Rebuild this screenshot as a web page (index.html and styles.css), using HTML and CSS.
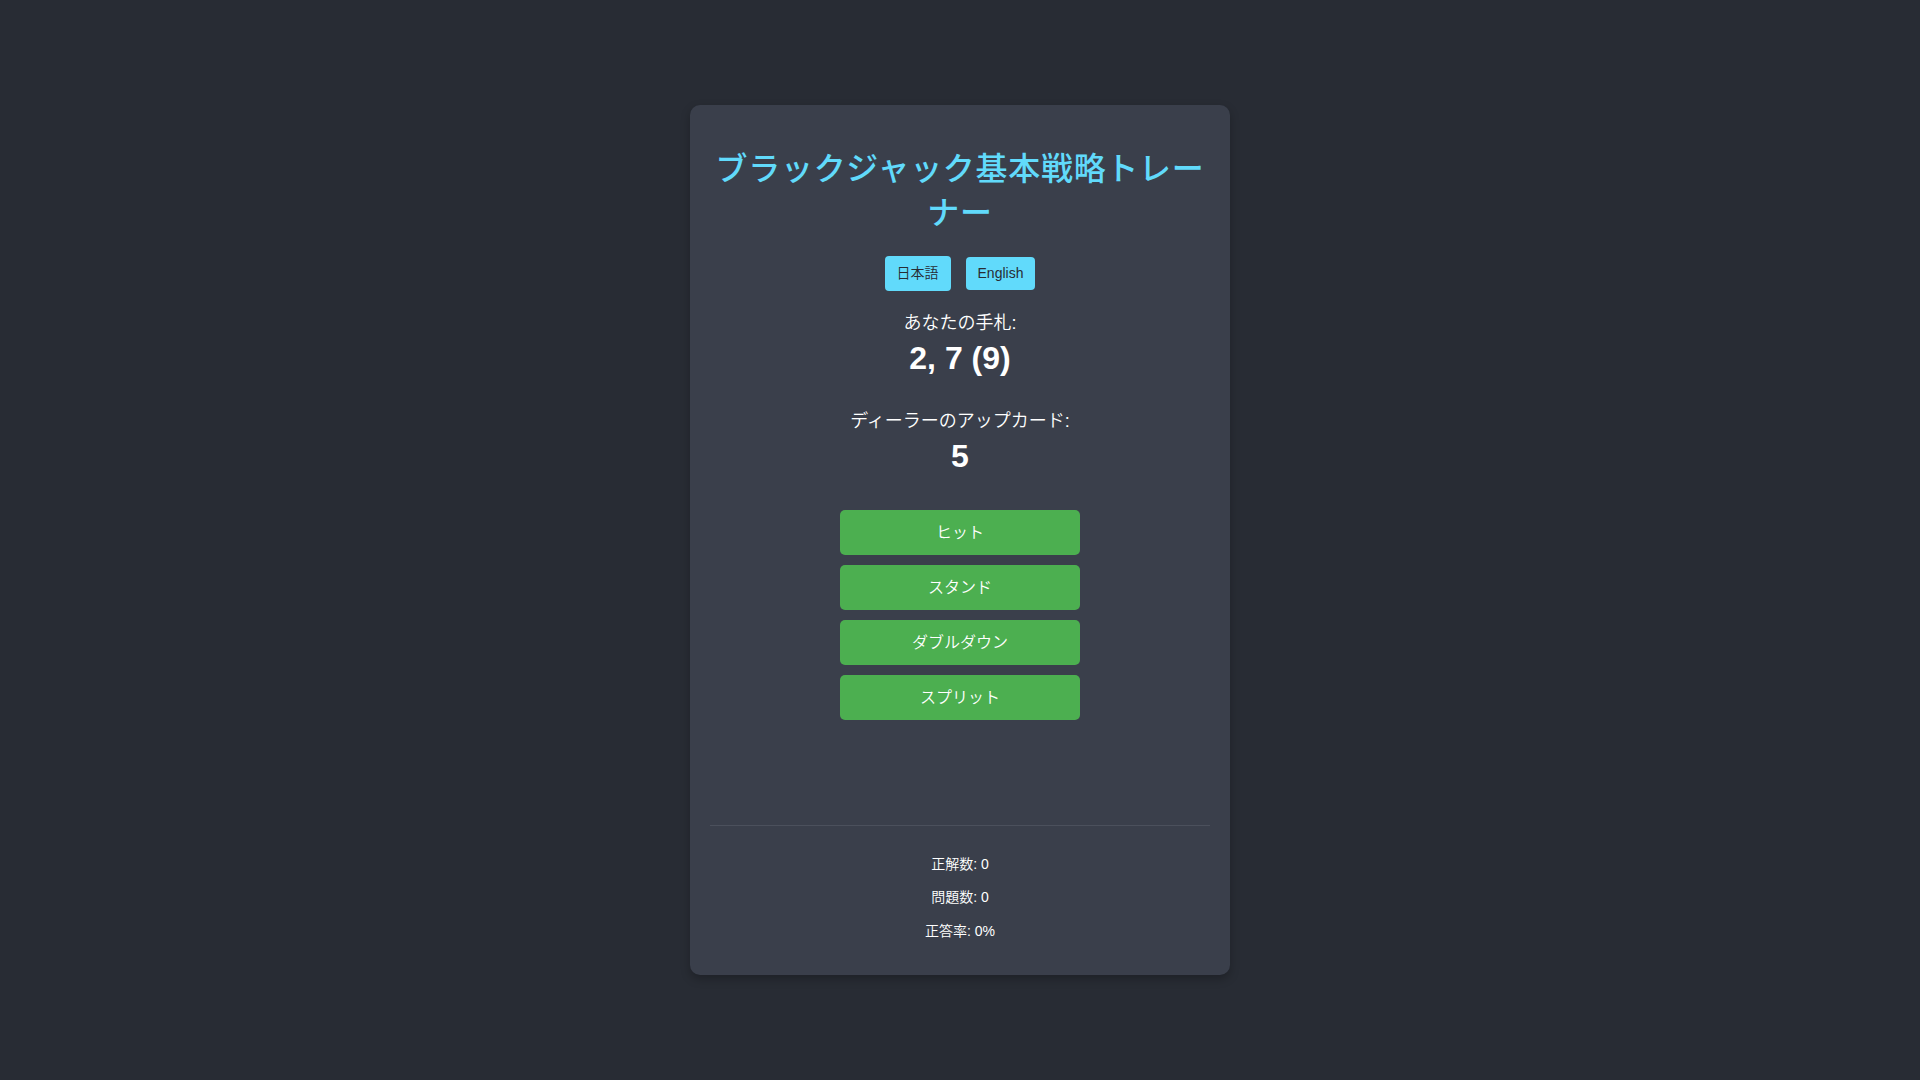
FILE: index.html
```html
<!DOCTYPE html>
<html lang="ja">
<head>
<meta charset="utf-8">
<title>ブラックジャック基本戦略トレーナー</title>
<link rel="stylesheet" href="styles.css">
</head>
<body>
<div class="card">
  <h1 class="title">ブラックジャック基本戦略トレーナー</h1>
  <div class="lang">
    <button class="lang-btn">日本語</button>
    <button class="lang-btn">English</button>
  </div>
  <div class="section">
    <div class="label">あなたの手札:</div>
    <div class="value">2, 7 (9)</div>
  </div>
  <div class="section">
    <div class="label">ディーラーのアップカード:</div>
    <div class="value">5</div>
  </div>
  <div class="actions">
    <button class="action">ヒット</button>
    <button class="action">スタンド</button>
    <button class="action">ダブルダウン</button>
    <button class="action">スプリット</button>
  </div>
  <div class="feedback"></div>
  <div class="stats">
    <p>正解数: 0</p>
    <p>問題数: 0</p>
    <p>正答率: 0%</p>
  </div>
</div>
</body>
</html>
```

FILE: styles.css
```css
html, body {
  margin: 0;
  padding: 0;
}
body {
  background: #282c34;
  color: #ffffff;
  font-family: "Liberation Sans", Arial, "Noto Sans CJK JP DemiLight", "Noto Sans CJK JP", sans-serif;
  min-height: 100vh;
  display: flex;
  align-items: center;
  justify-content: center;
  text-align: center;
}
.card {
  width: 500px;
  background: #3a3f4b;
  border-radius: 10px;
  padding: 20px 20px 22px;
  box-shadow: 0 4px 10px rgba(0, 0, 0, 0.25);
}
.title {
  color: #61dafb;
  font-family: "Liberation Sans", Arial, "Noto Sans CJK JP", sans-serif;
  font-size: 32px;
  font-weight: 500;
  letter-spacing: 0.7px;
  line-height: 44px;
  margin: 21.4px 0 22px;
}
.lang {
  height: 34px;
  margin-bottom: 19px;
  display: flex;
  justify-content: center;
  align-items: flex-start;
  gap: 15px;
}
.lang-btn {
  font-family: inherit;
  background: #61dafb;
  color: #282c34;
  border: none;
  border-radius: 4px;
  font-size: 14px;
  line-height: 17px;
  padding: 8px 12px;
  margin: 0;
  cursor: pointer;
}
.lang-btn:first-child {
  line-height: 19px;
  margin-top: -1px;
}
.section {
  margin-bottom: 31px;
}
.label {
  font-size: 18px;
  line-height: 26px;
  margin-bottom: 4px;
}
.value {
  font-size: 32px;
  font-weight: bold;
  line-height: 37px;
}
.actions {
  margin-top: 35px;
  display: flex;
  flex-direction: column;
  align-items: center;
  gap: 10px;
}
.action {
  font-family: inherit;
  width: 240px;
  height: 45px;
  background: #4caf50;
  color: #ffffff;
  border: none;
  border-radius: 5px;
  font-size: 16px;
  line-height: 21px;
  padding: 12px 0;
  margin: 0;
  cursor: pointer;
}
.feedback {
  height: 105px;
}
.stats {
  border-top: 1px solid #4b505c;
  padding-top: 15px;
}
.stats p {
  font-size: 14px;
  line-height: 20px;
  margin: 13px 0;
}
.stats p:last-child {
  margin-top: 14px;
  margin-bottom: 12px;
}
```
